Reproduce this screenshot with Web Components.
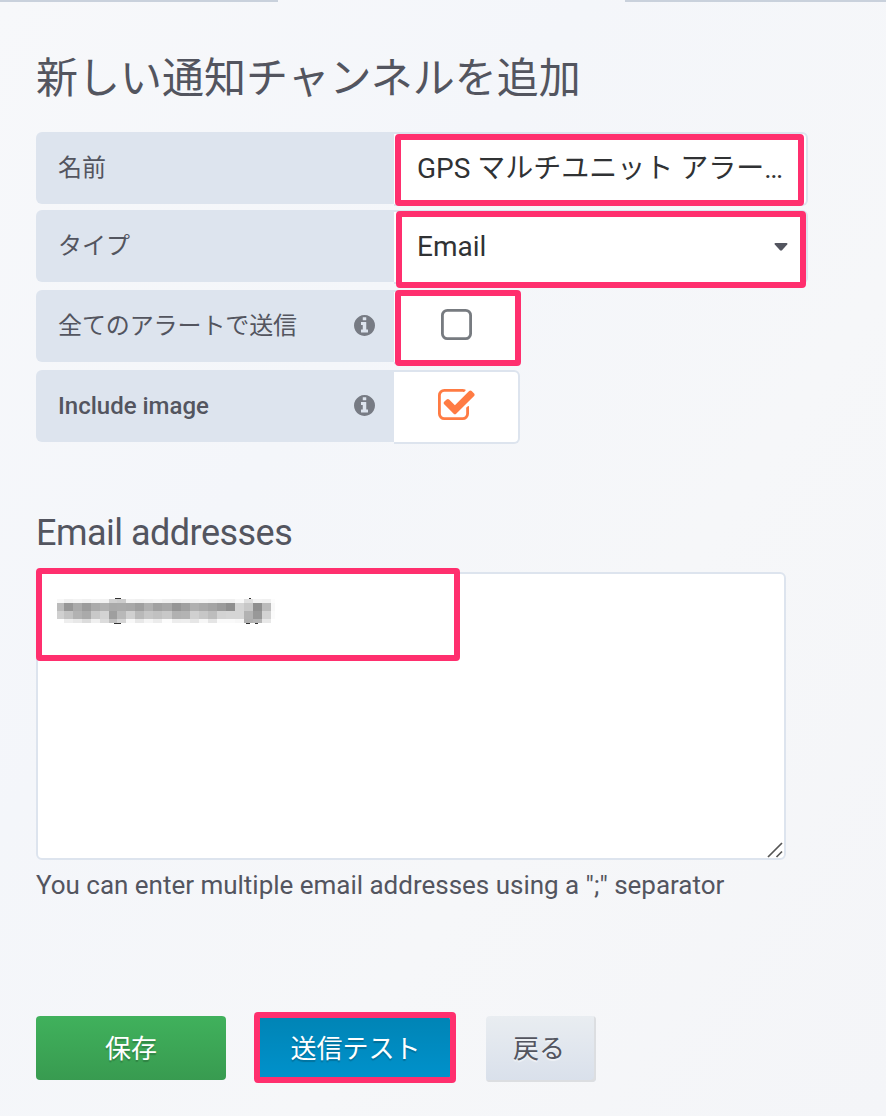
<!DOCTYPE html>
<html lang="ja">
<head>
<meta charset="utf-8">
<title>通知チャンネル</title>
<style>
html,body{margin:0}
body{width:886px;height:1116px;overflow:hidden;font-family:Roboto,"Noto Sans CJK JP",sans-serif;color:#53555f;background:linear-gradient(125deg,#f7f8fa 0%,#f4f6fa 35%,#f6f7f9 65%,#f4f5f8 100%)}
</style>
</head>
<body>
<channel-page></channel-page>
<script>
const define = (name, html, setup) => {
  const t = document.createElement('template');
  t.innerHTML = html;
  customElements.define(name, class extends HTMLElement {
    constructor() {
      super();
      this.attachShadow({mode: 'open'}).append(t.content.cloneNode(true));
    }
    connectedCallback() { if (setup) setup(this.shadowRoot, this); }
  });
};

define('focus-frame', `<style>:host{position:absolute;box-sizing:border-box;border:6px solid #ff2f6e;border-radius:4px;pointer-events:none;z-index:2}</style>`);

define('info-icon', `<style>:host{display:block;width:21px;height:21px}svg{display:block}</style>
<svg width="21" height="21" viewBox="128 128 1536 1536" fill="#777b84"><path d="M1152 1376v-160q0-14-9-23t-23-9h-96v-512q0-14-9-23t-23-9h-320q-14 0-23 9t-9 23v160q0 14 9 23t23 9h96v320h-96q-14 0-23 9t-9 23v160q0 14 9 23t23 9h448q14 0 23-9t9-23zm-128-896v-160q0-14-9-23t-23-9h-192q-14 0-23 9t-9 23v160q0 14 9 23t23 9h192q14 0 23-9t9-23zm640 416q0 209-103 385.5t-279.5 279.5-385.5 103-385.5-103-279.5-279.5-103-385.5 103-385.5 279.5-279.5 385.5-103 385.5 103 279.5 279.5 103 385.5z"/></svg>`);

define('check-mark', `<style>:host{display:block;width:38px;height:31px}svg{display:none;overflow:visible}
:host(:not([checked])) .off,:host([checked]) .on{display:block}</style>
<svg class="off" width="31" height="31" viewBox="192 128 1408 1408" fill="#777b80"><path d="M1312 256h-832q-66 0-113 47t-47 113v832q0 66 47 113t113 47h832q66 0 113-47t47-113v-832q0-66-47-113t-113-47zm288 160v832q0 119-84.5 203.5t-203.5 84.5h-832q-119 0-203.5-84.5t-84.5-203.5v-832q0-119 84.5-203.5t203.5-84.5h832q119 0 203.5 84.5t84.5 203.5z"/></svg>
<svg class="on" width="31" height="31" viewBox="64 128 1408 1408" fill="#ff7b43"><path d="M1472 930v318q0 119-84.5 203.5t-203.5 84.5h-832q-119 0-203.5-84.5t-84.5-203.5v-832q0-119 84.5-203.5t203.5-84.5h832q63 0 117 25 15 7 18 23 3 17-9 29l-49 49q-10 10-23 10-3 0-9-2-23-6-45-6h-832q-66 0-113 47t-47 113v832q0 66 47 113t113 47h832q66 0 113-47t47-113v-254q0-13 9-22l64-64q10-10 23-10 6 0 12 3 20 8 20 29zm231-489l-814 814q-24 24-57 24t-57-24l-430-430q-24-24-24-57t24-57l110-110q24-24 57-24t57 24l263 263 647-647q24-24 57-24t57 24l110 110q24 24 24 57t-24 57z"/></svg>`);

define('form-row', `<style>
:host{position:relative;display:flex;height:72px}
.label{box-sizing:border-box;width:358px;height:72px;padding:0 19.500px 2px 22px;display:flex;align-items:center;justify-content:space-between;background:#dde4ee;border-radius:6px 0 0 6px;font-size:24px;line-height:36px}
.cell{box-sizing:border-box;width:var(--w,414px);height:74px;padding:var(--pt,0) var(--pr,18px) var(--pb,0) 23px;display:flex;align-items:center;justify-content:space-between;background:#fff;border:solid #dde4ee;border-width:2px 2px 2px 0;border-radius:0 6px 6px 0;font-size:28px;line-height:40px;color:#303234;white-space:nowrap}
</style><div class="label"><slot name="label"></slot><slot name="info"></slot></div><div class="cell"><slot></slot></div><slot name="frame"></slot>`);

define('select-caret', `<style>:host{display:block;width:14px;height:8px}svg{display:block}</style><svg width="14" height="8"><path d="M1.500 0h11q1.500.3.700 1.500L8 7.300q-1 .9-2 0L.8 1.500Q0 .3 1.500 0z" fill="#53555f"/></svg>`);

define('masked-address', `<style>:host{display:block;width:222px;height:28px}svg{display:block}</style><svg width="222" height="28" shape-rendering="crispEdges"><g id="b"></g><path d="M58 1h6v1h-6zM57 26h7v1h-7zM192 1h2v1h-2zM189 26h4v1h-4zM198 26h3v1h-3z" fill="#333"/></svg>`, root => {
  const g = root.querySelector('#b');
  const edges = [0,7,16,25,34,43,52,60,69,78,87,96,105,115,124,133,142,151,160,169,178,187,196,205,214,218];
  const rows = [
    [2,4,'f8 f0 f3 f0 f4 f2 d0 cc f2 f0 f2 f4 f0 ee f0 f2 f4 f2 f0 f0 f8 e0 f2 f0 fc'],
    [6,8,'bb 97 aa 9b aa b1 a9 aa a8 9f b0 a1 a7 95 9f b0 aa a4 9b 8f d4 c8 8f bb f8'],
    [14,8,'d0 c3 b2 aa c8 d3 9f b9 d0 b9 c6 c1 c8 b1 b3 d0 c7 bd d3 d5 d5 b2 98 d3 fb'],
    [22,4,'ff ee e8 dc f0 dc c0 d5 f8 e8 f5 ec fc ed ee e6 f7 e5 fa fa f7 b0 b5 e8 ff']];
  for (const [y, h, cols] of rows) cols.split(' ').forEach((c, i) => {
    const r = document.createElementNS('http://www.w3.org/2000/svg', 'rect');
    for (const [k, v] of Object.entries({x: edges[i], y, width: edges[i+1] - edges[i], height: h, fill: '#' + c + c + c})) r.setAttribute(k, v);
    g.append(r);
  });
});

define('address-box', `<style>
:host{position:relative;display:block;box-sizing:border-box;width:750px;height:288px;padding:23px 0 0 19px;background:#fff;border:2px solid #dde4ee;border-radius:6px}
.grip{position:absolute;right:1px;bottom:0}
focus-frame{left:-2.500px;top:-6.500px;width:424.500px;height:93.500px}
</style><masked-address></masked-address>
<svg class="grip" width="16" height="16" stroke="#555" stroke-width="1.700"><path d="M1 15L15 1M9.500 15L15 9.500"/></svg><focus-frame></focus-frame>`);

define('action-button', `<style>
:host{position:relative;display:flex;box-sizing:border-box;align-items:center;justify-content:center;height:64px;padding-top:2px;border-radius:4px;color:#fff;font-size:26px;line-height:38px;text-shadow:0 2px 1px rgba(0,0,0,.2)}
:host([kind=save]){width:190px;background:linear-gradient(#40b15c,#389b50)}
:host([kind=test]){width:192px;padding-left:3px;background:linear-gradient(#0084b5,#0092cc)}
:host([kind=back]){width:110px;height:66px;padding:0 4px 0 0;color:#53555f;background:linear-gradient(#e9edf1,#d9e0eb);box-shadow:inset -2px -2px #dcdee1;text-shadow:0 2px 1px rgba(255,255,255,.5)}
</style><slot></slot><slot name="frame"></slot>`);

define('channel-page', `<style>
:host{display:block}
.tabs{display:flex;justify-content:space-between;height:2px}
.tabs i{background:#c9d1dc;width:278px}.tabs i+i{width:261px}
main{padding:0 0 0 36px}
h1{margin:0;height:130px;box-sizing:border-box;padding-top:46px;font-size:42px;line-height:62px;font-weight:400}
.form{display:grid;grid-template-rows:78px 80px 80px 72px}
h2{margin:69px 0 0;height:61px;font-size:36px;line-height:44px;font-weight:400;letter-spacing:-.52px}
p{margin:5px 0 0;font-size:26px;line-height:40px;letter-spacing:-.015px}
.actions{display:flex;align-items:flex-start;margin-top:111px}
.small{--w:126px;--pb:6px}
.small check-mark{margin-left:24px}
form-row span[slot]{padding-top:1px}
.dots{letter-spacing:-1.500px}
</style>
<div class="tabs"><i></i><i></i></div>
<main>
<h1>新しい通知チャンネルを追加</h1>
<div class="form">
<form-row><span slot="label">名前</span><span>GPS マルチユニット アラー<span class="dots">...</span></span><focus-frame slot="frame" style="left:359px;top:2px;width:409px;height:72px"></focus-frame></form-row>
<form-row><span slot="label">タイプ</span><span>Email</span><select-caret></select-caret><focus-frame slot="frame" style="left:360px;top:1px;width:410px;height:77px"></focus-frame></form-row>
<form-row class="small"><span slot="label" style="letter-spacing:-.1px">全てのアラートで送信</span><info-icon slot="info"></info-icon><check-mark></check-mark><focus-frame slot="frame" style="left:359px;top:0;width:126px;height:76px"></focus-frame></form-row>
<form-row class="small"><span slot="label" style="font-weight:500;padding-top:2px">Include image</span><info-icon slot="info"></info-icon><check-mark checked style="margin-left:21px"></check-mark></form-row>
</div>
<h2>Email addresses</h2>
<address-box></address-box>
<p>You can enter multiple email addresses using a ";" separator</p>
<div class="actions">
<action-button kind="save">保存</action-button>
<action-button kind="test" style="margin-left:32px">送信テスト<focus-frame slot="frame" style="left:-4px;top:-4px;width:202px;height:71px"></focus-frame></action-button>
<action-button kind="back" style="margin-left:36px">戻る</action-button>
</div>
</main>`);
</script>
</body>
</html>
